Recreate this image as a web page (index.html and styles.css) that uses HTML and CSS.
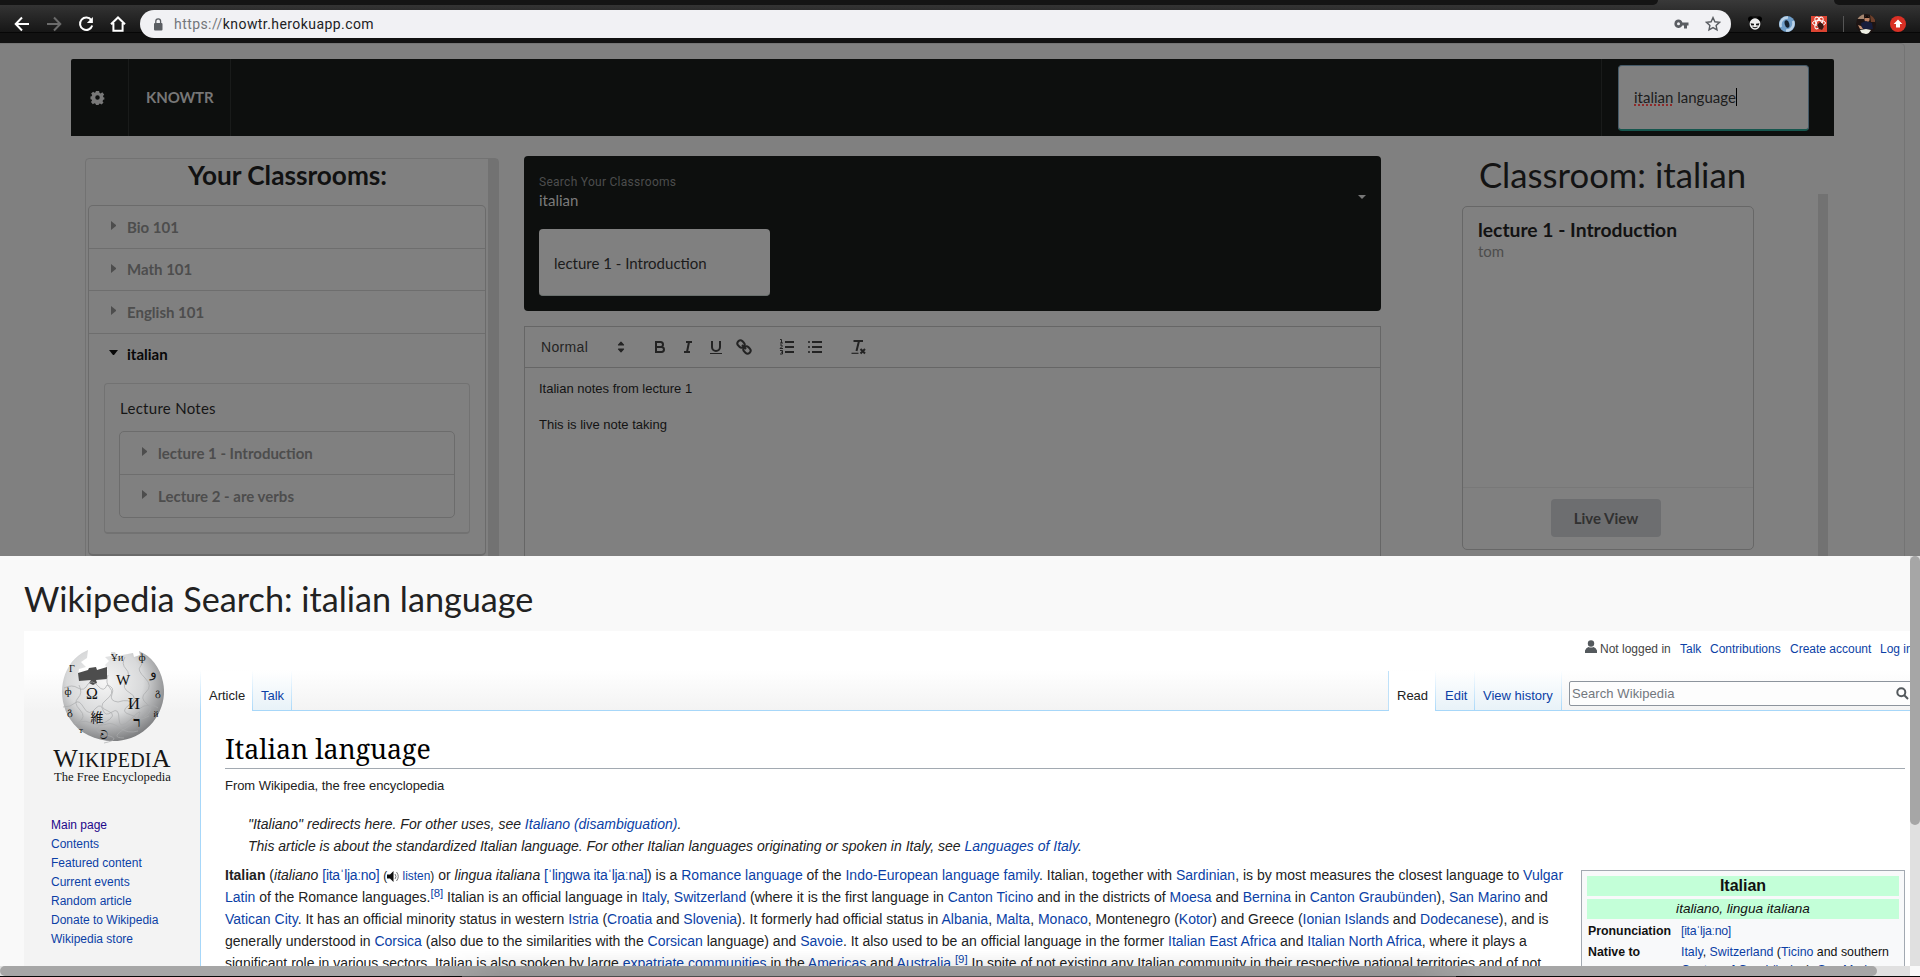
FILE: index.html
```html
<!DOCTYPE html>
<html lang="en">
<head>
<meta charset="utf-8">
<title>Knowtr</title>
<link rel="stylesheet" href="styles.css">
</head>
<body>
<header class="chrome">
  <div class="tabstrip"><span class="tab-left"></span><span class="tab-active"></span><span class="tab-right"></span></div>
  <div class="toolbar">
    <svg class="nav-ic" viewBox="0 0 16 16"><path d="M15 8H2M8 1.5L1.7 8L8 14.5" /></svg>
    <svg class="nav-ic dim" viewBox="0 0 16 16"><path d="M1 8h13M8 1.5L14.3 8L8 14.5" /></svg>
    <svg class="nav-ic" viewBox="0 0 16 16"><path d="M13.3 4.2A6.2 6.2 0 1 0 14.2 9.5"/><path d="M14.9 1v6H8.9z" fill="#fff" stroke="none"/></svg>
    <svg class="nav-ic" viewBox="0 0 16 16"><path d="M1 8.3L8 1.5L15 8.3M3.4 7v7.8h9.2V7"/></svg>
    <div class="omnibox">
      <svg class="lock" viewBox="0 0 10 13"><rect x="1" y="5" width="8.5" height="7.5" rx="1" fill="#5a5d62"/><path d="M2.8 5.5V3.2a2.3 2.3 0 0 1 4.8 0v2.3" fill="none" stroke="#5a5d62" stroke-width="1.3"/></svg>
      <span class="url"><span class="scheme">https://</span>knowtr.herokuapp.com</span>
      <svg class="key" viewBox="0 0 15 10"><path d="M4.5.5a4.2 4.2 0 1 0 3.9 6H10v3h3v-3h1.5v-3H8.4A4.2 4.2 0 0 0 4.5.5zm0 2.7a1.500 1.500 0 1 1 0 3a1.500 1.500 0 0 1 0-3z" fill="#5a5d62" fill-rule="evenodd"/></svg>
      <svg class="star" viewBox="0 0 16 16"><path d="M8 1.600l1.900 4.200 4.600.5-3.400 3.100.9 4.500L8 11.600l-4 2.300.9-4.500L1.500 6.300l4.600-.5z" fill="none" stroke="#5a5d62" stroke-width="1.400"/></svg>
    </div>
    <div class="exts">
      <svg class="e1" viewBox="0 0 16 16"><rect x="2" width="12" height="15" rx="3" fill="#141414"/><circle cx="3.500" cy="3" r="2.500" fill="#000"/><circle cx="12.500" cy="3" r="2.500" fill="#000"/><ellipse cx="8" cy="8" rx="5.400" ry="5.800" fill="#eee"/><path d="M3.600 7.200l3.400.6v1.400l-2.600.3zM12.400 7.200L9 7.800v1.400l2.600.3z" fill="#111"/><path d="M5.500 11q2.500 1.600 5 0" fill="none" stroke="#111" stroke-width="1"/></svg>
      <svg class="e2" viewBox="0 0 16 16"><circle cx="8" cy="8" r="8" fill="#6f9dc8"/><path d="M2 11A7 7 0 0 1 9 1.500M14 5a7 7 0 0 1-7 9.500" fill="none" stroke="#bcd3e8" stroke-width="2.500"/><ellipse cx="8" cy="8" rx="2.300" ry="3.800" transform="rotate(-15 8 8)" fill="#15212e"/></svg>
      <svg class="e3" viewBox="0 0 16 16"><rect width="16" height="16" fill="#dc4432"/><g fill="none" stroke="#fff" stroke-width="1"><ellipse cx="8" cy="7" rx="6.500" ry="2.600"/><ellipse cx="8" cy="7" rx="6.500" ry="2.600" transform="rotate(60 8 7)"/><ellipse cx="8" cy="7" rx="6.500" ry="2.600" transform="rotate(120 8 7)"/></g><path d="M6 9l3-3 3 2 1 3-2 3-3-1z" fill="#3b1511"/></svg>
      <span class="ext-sep"></span>
      <svg class="avatar" viewBox="0 0 20 20"><defs><clipPath id="av"><circle cx="10" cy="10" r="10"/></clipPath></defs><g clip-path="url(#av)"><rect width="20" height="20" fill="#1d1413"/><rect width="8" height="5" fill="#a48670"/><path d="M14 1h5v7h-4z" fill="#6e402b"/><ellipse cx="11" cy="5" rx="2.600" ry="3" fill="#b98062"/><path d="M8 4q3-4.500 6 0z" fill="#120c0b"/><path d="M5 9l5-2 6 2 1 6H6z" fill="#171d3c"/><path d="M2 11l3 1 2 3-3 0z" fill="#c69072"/><path d="M4 16l6-1 5 1-3 4H6z" fill="#eef0e5"/></g></svg>
      <svg class="e5" viewBox="0 0 16 16"><circle cx="8" cy="8" r="8" fill="#d93025"/><path d="M8 3.500l4.300 4.500H10v3.500H6V8H3.700z" fill="#fff"/></svg>
    </div>
  </div>
</header>

<main class="page">
  <nav class="menu">
    <div class="menu-item gear"><svg viewBox="0 0 16 16"><path fill-rule="evenodd" d="M6.300 1h3.400l.4 2 1.300.6 1.700-1.100 2 2.300-1.200 1.600.3 1.200 1.100.4v2l-1.300.5-.6 1.400 1 1.600-2.200 2-1.600-1.100-1 .4-.4 1.200H6.400l-.5-1.400-1.200-.5-1.700 1-2-2.200 1.200-1.600-.5-1.200L.5 9.800V7l1.300-.4.5-1.300-1.100-1.600L3.300 1.800l1.500 1.100 1.100-.4zM8 5.600a2.400 2.400 0 1 0 0 4.800a2.400 2.400 0 0 0 0-4.800z" fill="#787878"/></svg></div>
    <div class="menu-item brand">KNOWTR</div>
    <div class="menu-right"><div class="wiki-input"><span class="misspelt">italian</span>&nbsp;language<i class="caret"></i></div></div>
  </nav>

  <div class="columns">
    <section class="left">
      <div class="left-body">
        <h2 class="left-title">Your Classrooms:</h2>
        <div class="accordion">
          <div class="acc-row"><i class="tri"></i>Bio 101</div>
          <div class="acc-row"><i class="tri"></i>Math 101</div>
          <div class="acc-row"><i class="tri"></i>English 101</div>
          <div class="acc-row active"><i class="tri down"></i>italian</div>
          <div class="notes">
            <div class="notes-title">Lecture Notes</div>
            <div class="notes-list">
              <div class="acc-row"><i class="tri"></i>lecture 1 - Introduction</div>
              <div class="acc-row"><i class="tri"></i>Lecture 2 - are verbs</div>
            </div>
          </div>
        </div>
      </div>
      <div class="left-scroll"></div>
    </section>

    <section class="middle">
      <div class="search-card">
        <div class="select-label">Search Your Classrooms</div>
        <div class="select-value"><span>italian</span><i class="drop"></i></div>
        <div class="lecture-input">lecture 1 - Introduction</div>
      </div>
      <div class="editor">
        <div class="ed-bar">
          <span class="normal">Normal</span>
          <svg class="ic updown" viewBox="0 0 18 18"><path d="M6.500 7L9 4.200L11.500 7zM6.500 11L9 13.800L11.500 11z" fill="#232323" stroke="#232323" stroke-width="1.200" stroke-linejoin="round"/></svg>
          <svg class="ic bold" viewBox="0 0 18 18"><path d="M5 4h4.500a2.500 2.500 0 0 1 0 5H5zM5 9h5.500a2.500 2.500 0 0 1 0 5H5z"/></svg>
          <svg class="ic" viewBox="0 0 18 18"><path d="M7 4h6M5 14h6M8 14l2-10"/></svg>
          <svg class="ic" viewBox="0 0 18 18"><path d="M5 3v6a4 4 0 0 0 8 0V3"/><path d="M3 15.500h12" stroke-width="1"/></svg>
          <svg class="ic" viewBox="0 0 18 18"><path d="M7 7l4 4"/><rect x="-3" y="-3.800" width="6" height="7.600" rx="3" transform="translate(6 6) rotate(-45)"/><rect x="-3" y="-3.800" width="6" height="7.600" rx="3" transform="translate(12 12) rotate(-45)"/></svg>
          <svg class="ic gap" viewBox="0 0 18 18"><path d="M7 4h9M7 9h9M7 14h9"/><path d="M2 1.500h1.500V5M2 5h3M2 7h2v1.500L2 10.500h3M2 12.500h2.500v3.500H2M3 14.200h1.500" stroke-width="1"/></svg>
          <svg class="ic" viewBox="0 0 18 18"><path d="M6 4h10M6 9h10M6 14h10M2.200 4h1.600M2.200 9h1.600M2.200 14h1.600"/></svg>
          <svg class="ic gap" viewBox="0 0 18 18"><path d="M4.500 3h9.500M10 3L7.500 13M11.500 11l4.500 4.500M16 11l-4.500 4.500"/><path d="M2.500 15.300h7" stroke-width="1.200"/></svg>
        </div>
        <div class="ed-text"><p>Italian notes from lecture 1</p><p>This is live note taking</p></div>
      </div>
    </section>

    <section class="right">
      <h1 class="right-title">Classroom: italian</h1>
      <div class="right-row">
        <div class="lecture-card">
          <div class="lc-body"><div class="lc-head">lecture 1 - Introduction</div><div class="lc-meta">tom</div></div>
          <div class="lc-foot"><span class="btn">Live View</span></div>
        </div>
        <div class="right-scroll"></div>
      </div>
    </section>
  </div>
  <div class="page-edge"></div>
</main>

<section class="drawer">
  <div class="drawer-main">
    <h1 class="drawer-title">Wikipedia Search: italian language</h1>
    <div class="wiki">
      <aside class="side">
        <svg class="globe" viewBox="0 0 122 105">
          <defs><radialGradient id="gl" cx=".42" cy=".35" r=".68"><stop offset="0" stop-color="#f6f6f6"/><stop offset=".55" stop-color="#d8d9da"/><stop offset="1" stop-color="#77787a"/></radialGradient></defs>
          <path d="M37 8L31 11C10 24 5 55 19 77C31 96 58 104 80 96C104 87 117 62 112 40C109 25 100 14 88 9l1 4-6 2-1-4-16 3-2-4-4 0 0 4-6 1 4 4-4 4 3 5L27 33l1-6 7-2-5-5 6-4z" fill="url(#gl)"/>
          <path d="M27 31l10-3 1-2 7-1 1 3 10-3v12l-11 1 1 3-4 2-4-2 2-3-12 1z" fill="#4d4d4d"/>
          <g transform="translate(3 3)" fill="none" stroke="#a9aaac" stroke-width=".7"><path d="M10 43q8-4 14 0t10-4q4-5 10 2t9-1q8 2 5 9t6 8q12-4 15 3t11 1q10-2 14 2M9 62q8 0 12-4t9 5 12 0q5-5 7 2t9 2 7 7 12 0 8-4 10 1M20 79q10-4 14-2t9 3 10-1 13 4 18 3M25 40q4 8-1 13t2 12-2 13M54 30q-3 8 2 13t-4 12 2 11-4 12 2 12-2 8M71 12q-4 7 1 12t0 12 4 12-1 12 2 10-5 13-2 10M89 10q0 9-3 12t5 11 1 14 1 12-3 13"/></g>
          <g fill="#111" font-family="Liberation Serif" font-size="15" text-anchor="middle"><text x="41" y="57" font-size="16">Ω</text><text x="72" y="43">W</text><text x="83" y="67" font-size="17">И</text><text x="46" y="80" class="cjk">維</text><text x="86" y="85" font-weight="700">ר</text><text x="102" y="35" font-size="14">و</text><text x="66" y="19" font-size="10">Ұи</text><text x="91" y="19" font-size="11">ф</text><text x="21" y="30" font-size="10">Γ</text><text x="17" y="53" font-size="11">ф</text><text x="19" y="73" font-size="10">გ</text><text x="30" y="91" font-size="9">т</text><text x="53" y="97" font-size="11">ව</text><text x="107" y="54" font-size="10">გ</text><text x="105" y="75" font-size="9">й</text></g>
        </svg>
        <div class="wordmark"><b>W</b>IKIPEDI<b>A</b></div>
        <div class="tagline">The Free Encyclopedia</div>
        <ul class="side-nav"><li class="visited">Main page</li><li>Contents</li><li>Featured content</li><li>Current events</li><li>Random article</li><li>Donate to Wikipedia</li><li>Wikipedia store</li></ul>
      </aside>
      <div class="wiki-col">
        <div class="personal"><svg viewBox="0 0 12 14"><circle cx="6" cy="3.500" r="3.200" fill="#54595d"/><path d="M0 13V10.500Q1 7.500 3.500 7q2.500 1 5 0Q11 7.500 12 10.500V13z" fill="#54595d"/></svg><span class="anon">Not logged in</span><a class="p-talk">Talk</a><a class="p-con">Contributions</a><a class="p-new">Create account</a><a class="p-log">Log in</a></div>
        <div class="wtabs">
          <span class="wtab on art">Article</span><span class="wtab talk">Talk</span><span class="grow"></span>
          <span class="wtab on read">Read</span><span class="wtab edit">Edit</span><span class="wtab hist">View history</span>
          <div class="wsearch"><span>Search Wikipedia</span><svg viewBox="0 0 13 13"><circle cx="5.300" cy="5.300" r="4" /><path d="M8.300 8.300L12 12"/></svg></div>
        </div>
        <article class="content">
          <h1 class="wtitle">Italian language</h1>
          <div class="from">From Wikipedia, the free encyclopedia</div>
          <div class="hat">"Italiano" redirects here. For other uses, see <a>Italiano (disambiguation)</a>.</div>
          <div class="hat">This article is about the standardized Italian language. For other Italian languages originating or spoken in Italy, see <a>Languages of Italy</a>.</div>
          <div class="cols">
            <div class="para">
              <div><b>Italian</b> (<i>italiano</i> <a class="ipa">[itaˈljaːno]</a> <small>(<svg class="spk" viewBox="0 0 12 11"><path d="M0 3.500h3L6.500 0v11L3 7.500H0z" fill="#111"/><path d="M8 3q2 2.500 0 5M9.500 1q3.500 4.500 0 9" fill="none" stroke="#777"/></svg> <a>listen</a>)</small> or <i>lingua italiana</i> <a class="ipa">[ˈliŋɡwa itaˈljaːna]</a>) is a <a>Romance language</a> of the <a>Indo-European language family</a>. Italian, together with <a>Sardinian</a>, is by most measures the closest language to <a>Vulgar</a></div>
              <div><a>Latin</a> of the Romance languages.<a class="sup">[8]</a> Italian is an official language in <a>Italy</a>, <a>Switzerland</a> (where it is the first language in <a>Canton Ticino</a> and in the districts of <a>Moesa</a> and <a>Bernina</a> in <a>Canton Graubünden</a>), <a>San Marino</a> and</div>
              <div><a>Vatican City</a>. It has an official minority status in western <a>Istria</a> (<a>Croatia</a> and <a>Slovenia</a>). It formerly had official status in <a>Albania</a>, <a>Malta</a>, <a>Monaco</a>, Montenegro (<a>Kotor</a>) and Greece (<a>Ionian Islands</a> and <a>Dodecanese</a>), and is</div>
              <div>generally understood in <a>Corsica</a> (also due to the similarities with the <a>Corsican</a> language) and <a>Savoie</a>. It also used to be an official language in the former <a>Italian East Africa</a> and <a>Italian North Africa</a>, where it plays a</div>
              <div>significant role in various sectors. Italian is also spoken by large <a>expatriate communities</a> in the <a>Americas</a> and <a>Australia</a>.<a class="sup">[9]</a> In spite of not existing any Italian community in their respective national territories and of not</div>
            </div>
            <div class="infobox">
              <div class="ib-title">Italian</div>
              <div class="ib-sub">italiano, lingua italiana</div>
              <div class="ib-grid"><b>Pronunciation</b><span><a class="ipa">[itaˈljaːno]</a></span><b>Native to</b><span><a>Italy</a>, <a>Switzerland</a> (<a>Ticino</a> and southern<br><a>Canton of Graubünden</a>), <a>San Marino</a>,</span></div>
            </div>
          </div>
        </article>
      </div>
    </div>
  </div>
  <div class="vscroll"><i></i></div>
  <div class="hscroll"><i></i></div>
  <div class="dock-shade"></div>
</section>
<div class="dock-edge"></div>
</body>
</html>
```
FILE: styles.css
```css
* { box-sizing: border-box; }
body { margin: 0; width: 1920px; height: 977px; overflow: hidden; background: #080808; font-family: Lato, "Liberation Sans", sans-serif; display: flex; flex-direction: column; white-space: nowrap; }
h1, h2, p, ul { margin: 0; padding: 0; font-weight: 400; }

/* Browser toolbar */
.chrome { height: 43px; flex: none; display: flex; flex-direction: column; background: linear-gradient(#393939, #161616 32px, #060606 32px, #060606 33px, #111 33px); }
.tabstrip { height: 5px; display: flex; flex: none; }
.tab-left { width: 1658px; background: #141414; border-bottom-right-radius: 5px; }
.tab-active { width: 176px; }
.tab-right { flex: 1; background: #141414; border-bottom-left-radius: 5px; }
.toolbar { height: 38px; display: flex; align-items: center; padding: 0 9px 0 14px; }
.nav-ic { width: 16px; height: 16px; margin-right: 16px; fill: none; stroke: #fff; stroke-width: 2; flex: none; }
.nav-ic.dim { stroke: #6b6b6b; }
.omnibox { width: 1591px; margin-left: -2px; height: 28px; border-radius: 14px; background: #f1f1f4; display: flex; align-items: center; padding: 0 10px 0 13px; flex: none; }
.lock { width: 10px; height: 13px; margin-right: 11px; }
.url { font: 14px Roboto, sans-serif; color: #202124; flex: 1; letter-spacing: .43px; }
.scheme { color: #73767b; }
.key { width: 15px; height: 10px; margin-right: 16px; }
.star { width: 16px; height: 16px; }
.exts { display: flex; align-items: center; flex: 1; padding-left: 16px; }
.e1, .e2, .e3 { width: 16px; height: 16px; margin-right: 16px; }
.ext-sep { width: 1px; height: 16px; background: #555; margin-right: 12px; }
.avatar { width: 20px; height: 20px; margin-right: 14px; }
.e5 { width: 16px; height: 16px; }

/* Dimmed application page */
.page { height: 513px; flex: none; background: #808080; padding: 16px 86px 0 71px; position: relative; overflow: hidden; }
.page-edge { position: absolute; top: 0; left: -3px; width: 1908px; height: 560px; border: 1px solid #747474; border-radius: 4px; }
.menu { height: 77px; background: #0d0f0e; display: flex; border-radius: 2px 2px 0 0; }
.menu-item { border-right: 1px solid #191b1a; display: flex; align-items: center; color: #777; font-size: 15px; font-weight: 700; padding-bottom: 2px; }
.gear { width: 58px; padding-left: 19px; padding-bottom: 1px; }
.gear svg { width: 15px; height: 15px; }
.brand { width: 102px; padding-left: 17px; letter-spacing: -.1px; }
.menu-right { margin-left: auto; border-left: 1px solid #191b1a; width: 233px; padding: 6px 0 0 16px; }
.wiki-input { width: 191px; height: 66px; background: #808080; border: 1px solid #455a68; border-bottom: 2px solid #16564e; border-radius: 4px; padding: 0 0 2px 15px; display: flex; align-items: center; font-size: 15px; color: #1c1c1c; }
.misspelt { text-decoration: underline dotted #8f2a2a 2px; text-underline-offset: 2px; text-decoration-skip-ink: none; }
.caret { width: 1px; height: 18px; background: #000; }
.columns { display: flex; }
.left { margin: 22px 0 0 14px; width: 414px; height: 420px; border: 1px solid #727272; border-radius: 4px; display: flex; flex: none; }
.left-body { width: 401px; padding: 0 0 0 2px; }
.left-scroll { width: 10px; background: #727272; margin-left: 1px; }
.left-title { height: 46px; line-height: 32px; text-align: center; font-size: 26.200px; font-weight: 700; color: #111; }
.accordion { width: 398px; height: 351px; border: 1px solid #6b6b6b; border-bottom-width: 2px; border-radius: 5px; }
.acc-row { height: 42.500px; border-bottom: 1px solid #6e6e6e; padding: 0 0 0 22px; display: flex; align-items: center; font-size: 15px; font-weight: 700; color: #4d4d4d; }
.tri { border: 4.500px solid transparent; border-left: 5px solid #4d4d4d; border-right: 0; width: 5px; height: 9px; margin: -2px 11px 0 0; }
.tri.down { border: 4.500px solid transparent; border-top: 5px solid #080808; border-bottom: 0; width: 9px; height: 5px; margin: -3px 9px 0 -2px; }
.acc-row.active { color: #080808; border: 0; padding-bottom: 2px; }
.notes { margin: 7px 15px 0 15px; height: 151px; border: 1px solid #727272; border-bottom: 2px solid #727272; border-radius: 4px; padding: 15px 14px 0 14px; }
.notes-title { font-size: 15px; line-height: 19px; color: #161616; padding-left: 1px; height: 32px; letter-spacing: .28px; }
.notes-list { height: 87px; border: 1px solid #6c6c6c; border-radius: 5px; }
.notes-list .acc-row:last-child { border: 0; }

.middle { margin: 20px 0 0 25px; width: 857px; flex: none; }
.search-card { height: 155px; background: #0d0f0e; border-radius: 4px; padding: 18px 15px 0; }
.select-label { font: 12px/16px Roboto, sans-serif; color: #4c4d4d; letter-spacing: .28px; }
.select-value { font-size: 15px; line-height: 20px; height: 39px; color: #7b7b7b; display: flex; justify-content: space-between; padding: 0; }
.drop { border: 4px solid transparent; border-top: 4px solid #777; border-bottom: 0; height: 4px; margin-top: 5px; }
.lecture-input { width: 231px; height: 67px; background: #808080; border-radius: 4px; border-bottom: 1px solid #6a706e; font-size: 15px; line-height: 69px; padding-left: 15px; color: #1b1b1b; }
.editor { margin-top: 15px; height: 240px; border: 1px solid #666; }
.ed-bar { height: 41px; border-bottom: 1px solid #666; display: flex; align-items: center; padding-left: 16px; }
.normal { font: 500 14px "Liberation Sans", Arial, sans-serif; color: #242424; width: 71px; letter-spacing: .35px; }
.ic { width: 18px; height: 18px; fill: none; stroke: #232323; stroke-width: 2; margin-right: 10px; flex: none; }
.ic.updown { margin-right: 21px; }
.ic.gap { margin-left: 15px; }
.ed-text { font: 13px/18px "Liberation Sans", Arial, sans-serif; color: #131313; padding: 12px 14px; }
.ed-text p { margin-bottom: 18px; }

.right { flex: 1; padding: 19px 0 0 81px; }
.right-title { width: 301px; text-align: center; font-size: 34.700px; line-height: 40px; height: 39px; color: #131313; }
.right-row { display: flex; justify-content: space-between; padding-right: 6px; }
.lecture-card { width: 292px; height: 344px; margin-top: 12px; border: 1px solid #676767; border-radius: 5px; display: flex; flex-direction: column; }
.lc-body { flex: 1; padding: 12px 15px; }
.lc-head { font-size: 19.300px; line-height: 22px; font-weight: 700; color: #121212; }
.lc-meta { font-size: 15px; line-height: 20px; color: #4d4d4d; }
.lc-foot { height: 62px; border-top: 1px solid #787878; display: flex; justify-content: center; padding: 11px 4px 0 0; }
.btn { width: 110px; height: 38px; line-height: 38px; text-align: center; background: #6d6e70; border-radius: 4px; font-size: 15px; font-weight: 700; color: #313131; }
.right-scroll { width: 10px; height: 380px; background: #727272; }

/* Wikipedia drawer */
.drawer { height: 420px; flex: none; display: grid; grid-template-columns: 1910px 10px; grid-template-rows: 410px 10px; background: #f9f9f9; position: relative; }
.drawer-main { overflow: hidden; padding-left: 24px; }
.drawer-title { font-size: 34.200px; line-height: 40px; padding-top: 23px; height: 75px; color: #222; }
.vscroll { background: #e0e0e0; }
.vscroll i { display: block; height: 269px; background: #a6a6a6; border-radius: 5px; }
.hscroll { background: #e0e0e0; }
.hscroll i { display: block; width: 1877px; height: 10px; background: #a6a6a6; border-radius: 5px; }
.dock-shade { position: absolute; left: 440px; bottom: 0; width: 1036px; height: 26px; background: linear-gradient(transparent, rgba(0, 0, 0, .1)); -webkit-mask-image: linear-gradient(90deg, transparent, #000 60px, #000 976px, transparent); mask-image: linear-gradient(90deg, transparent, #000 60px, #000 976px, transparent); }
.dock-edge { width: 994px; height: 1px; margin-left: 462px; background: #4c4c4c; flex: none; }
.wiki { display: flex; height: 340px; width: 1900px; font-family: "Liberation Sans", Arial, sans-serif; background: linear-gradient(#fff 38px, #f3f3f3 80px); }
.wiki a { color: #0b3fa6; }
.side { width: 176px; flex: none; padding: 11px 0 0 27px; }
.globe { width: 122px; height: 105px; display: block; overflow: hidden; }
.cjk { font-family: "Noto Sans CJK JP", sans-serif; font-size: 13px; }
.wordmark, .tagline { font-family: "Liberation Serif", serif; width: 122px; text-align: center; color: #161616; }
.wordmark { font-size: 20px; line-height: 24px; height: 23px; display: flex; justify-content: center; align-items: baseline; letter-spacing: .2px; }
.wordmark b { font-weight: 400; font-size: 26px; }
.tagline { font-size: 12.600px; line-height: 14px; height: 47px; padding-left: 1px; }
.side-nav { list-style: none; font-size: 12px; line-height: 19px; color: #0b3fa6; margin: -1px 0 0; }
.side-nav .visited { color: #22088a; }
.wiki-col { flex: 1; display: flex; flex-direction: column; }
.personal { height: 40px; padding: 0 0 5px 1385px; display: flex; align-items: center; font-size: 12px; color: #54595d; flex: none; }
.personal svg { width: 12px; height: 14px; margin: -3px 3px 0 0; }
.anon { width: 80px; color: #444; }
.p-talk { width: 30px; } .p-con { width: 80px; } .p-new { width: 90px; }
.wtabs { height: 40px; display: flex; border-bottom: 1px solid #a7d7f9; flex: none; font-size: 13px; }
.wtab { height: 39px; padding: 16px 0 0 9px; line-height: 17px; border-image: linear-gradient(#fff, #a7d7f9) 1; border-width: 0 1px 0 0; border-style: solid; color: #0b3fa6; background: linear-gradient(#fff, #e8f2f8); flex: none; }
.wtab.on { background: #fff; color: #222; height: 40px; }
.art { width: 53px; border-left-width: 1px; padding-left: 8px; }
.talk { width: 39px; padding-left: 8px; }
.grow { width: 1097px; border-right: 1px solid #bfe1f9; flex: none; }
.read { width: 47px; padding-left: 8px; }
.edit { width: 39px; }
.hist { width: 87px; padding-left: 8px; }
.wsearch { margin: 10px 0 0 7px; width: 360px; height: 25px; border: 1px solid #8d949d; border-radius: 2px; background: #fdfdfd; color: #72777d; display: flex; align-items: center; padding: 0 0 1px 2px; letter-spacing: .08px; }
.wsearch span { width: 324px; }
.wsearch svg { width: 13px; height: 13px; fill: none; stroke: #54595d; stroke-width: 2; }
.content { flex: 1; background: #fff; border-left: 1px solid #a7d7f9; padding: 19px 19px 0 24px; color: #222; }
.wtitle { font-family: "Noto Serif", "Liberation Serif", serif; font-size: 26.700px; line-height: 37px; height: 39px; border-bottom: 1px solid #a2a9b1; color: #000; width: 1680px; }
.from { font-size: 13px; line-height: 16px; margin: 9px 0 19px; letter-spacing: -.05px; }
.hat { font-size: 14px; font-style: italic; line-height: 22px; padding-left: 23px; }
.cols { display: flex; width: 1680px; justify-content: space-between; margin-top: 7px; }
.para { font-size: 14px; line-height: 22px; width: 1345px; }
.para > div { height: 22px; }
.para small { font-size: 11.900px; }
.ipa { letter-spacing: -.3px; }
.spk { width: 12px; height: 11px; vertical-align: -2px; }
.sup { font-size: 11.400px; position: relative; top: -5px; line-height: 1; }
.infobox { width: 324px; height: 120px; border: 1px solid #a2a9b1; background: #f8f9fa; padding: 5px; margin-top: 6px; color: #111; font-size: 12.350px; }
.ib-title { height: 20px; line-height: 19px; background: #c3ffd8; text-align: center; font-size: 16px; font-weight: 700; }
.ib-sub { height: 20px; line-height: 19px; background: #c3ffd8; text-align: center; font-size: 13.600px; font-style: italic; margin: 3px 0 1px; }
.ib-grid { display: grid; grid-template-columns: 93px 1fr; grid-template-rows: 21px auto; line-height: 18px; padding: 2px 1px; }
```
